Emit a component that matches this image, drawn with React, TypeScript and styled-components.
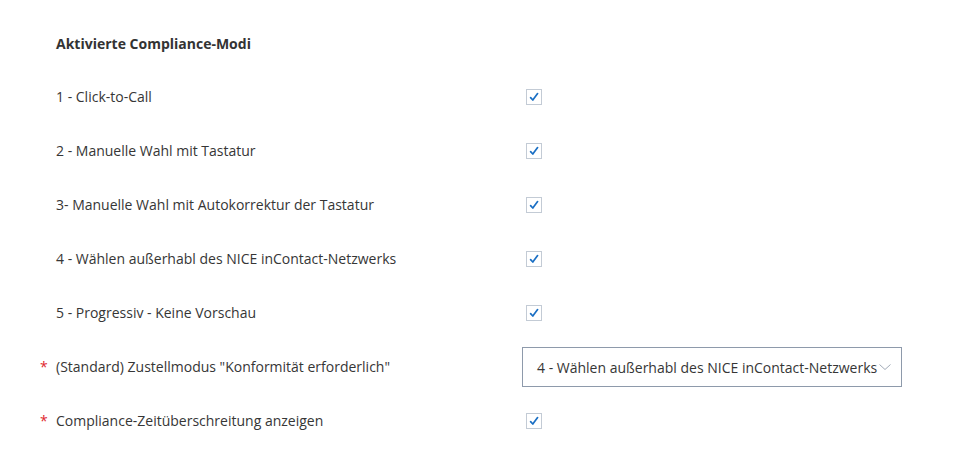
import React from 'react'
import styled, { createGlobalStyle } from 'styled-components'

const GlobalStyle = createGlobalStyle`
  html, body {
    margin: 0;
    padding: 0;
    background: #ffffff;
    font-family: 'Open Sans', 'Liberation Sans', sans-serif;
    color: #333333;
  }
`

const Page = styled.div`
  padding: 34px 0 0 40px;
`

const Title = styled.div`
  padding-left: 16px;
  font-size: 14px;
  font-weight: 700;
  line-height: 20px;
  color: #333333;
  margin-bottom: 16px;
`

const Row = styled.div`
  display: grid;
  grid-template-columns: 16px 466px auto;
  align-items: center;
  height: 54px;
`

const Required = styled.span`
  color: #e0282e;
  font-size: 14px;
  line-height: 20px;
  padding-left: 0;
`

const Label = styled.div`
  font-size: 14px;
  line-height: 20px;
  color: #363636;
`

const Control = styled.div`
  display: flex;
  align-items: center;
`

const Box = styled.span`
  display: inline-flex;
  align-items: center;
  justify-content: center;
  box-sizing: border-box;
  width: 16px;
  height: 16px;
  margin: -1px 0 0 4px;
  border: 1px solid #c3cbd5;
  background: #ffffff;
`

const Select = styled.div`
  display: flex;
  align-items: center;
  justify-content: space-between;
  box-sizing: border-box;
  width: 380px;
  height: 40px;
  padding: 0 9px 0 14px;
  border: 1px solid #8e9aab;
  font-size: 14px;
  color: #363636;
`

const Check = () => (
  <Box>
    <svg width="10" height="10" viewBox="0 0 10 10">
      <path d="M1.6 5.6 L3.8 8 L8.6 1.6" fill="none" stroke="#1a6fc4" strokeWidth="1.7" strokeLinecap="round" strokeLinejoin="round" />
    </svg>
  </Box>
)

const Chevron = () => (
  <svg width="14" height="14" viewBox="0 0 14 14">
    <path d="M1.5 4.5 L7 9.5 L12.5 4.5" fill="none" stroke="#a2abb8" strokeWidth="1" />
  </svg>
)

interface Item {
  label: string
  required?: boolean
  select?: string
}

const items: Item[] = [
  { label: '1 - Click-to-Call' },
  { label: '2 - Manuelle Wahl mit Tastatur' },
  { label: '3- Manuelle Wahl mit Autokorrektur der Tastatur' },
  { label: '4 - Wählen außerhabl des NICE inContact-Netzwerks' },
  { label: '5 - Progressiv - Keine Vorschau' },
  {
    label: '(Standard) Zustellmodus "Konformität erforderlich"',
    required: true,
    select: '4 - Wählen außerhabl des NICE inContact-Netzwerks',
  },
  { label: 'Compliance-Zeitüberschreitung anzeigen', required: true },
]

const App: React.FC = () => (
  <Page>
    <GlobalStyle />
    <Title>Aktivierte Compliance-Modi</Title>
    {items.map(item => (
      <Row key={item.label}>
        <Required>{item.required ? '*' : ''}</Required>
        <Label>{item.label}</Label>
        <Control>
          {item.select ? (
            <Select>
              <span>{item.select}</span>
              <Chevron />
            </Select>
          ) : (
            <Check />
          )}
        </Control>
      </Row>
    ))}
  </Page>
)

export default App
